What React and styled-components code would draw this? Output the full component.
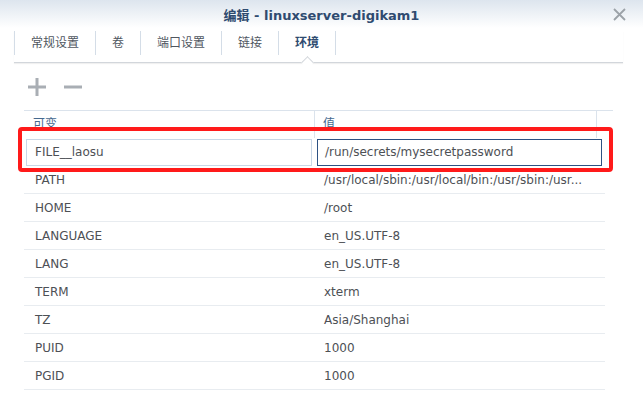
import React from 'react';
import styled, { createGlobalStyle } from 'styled-components';

const GlobalStyle = createGlobalStyle`
    body {
        margin: 0;
        background: #fff;
        font-family: "DejaVu Sans", "Noto Sans CJK SC", sans-serif;
        font-size: 12px;
        color: #4d5055;
    }
`

const Window = styled.div`
    width: 643px;
    height: 400px;
    overflow: hidden;
    background: #fff;
`

const TitleBar = styled.div`
    height: 28px;
    display: grid;
    grid-template-columns: 1fr auto 1fr;
    align-items: center;
    background: linear-gradient(#dde5ee, #ffffff);
`

const Title = styled.div`
    grid-column: 2;
    font-size: 13px;
    font-weight: bold;
    color: #2f4b70;
`

const CloseButton = styled.div`
    justify-self: end;
    margin-right: 17px;
    display: flex;
`

const TabBar = styled.div`
    display: flex;
    margin: 3px 20px 0 14px;
    padding-bottom: 7px;
    border-bottom: 1px solid #d2d6db;
    box-shadow: 0 1px 1px rgba(0,0,0,.06);
`

const Tab = styled.div`
    position: relative;
    height: 24px;
    line-height: 24px;
    padding: 0 16px;
    border-left: 1px solid #d4dde7;
    color: ${p => p.active ? '#2f4b70' : '#50575f'};
    font-weight: ${p => p.active ? 'bold' : 'normal'};

    &:last-child {
        border-right: 1px solid #d4dde7;
    }

    ${p => p.active && `
        &::after {
            content: '';
            position: absolute;
            left: 50%;
            bottom: -12px;
            width: 8px;
            height: 8px;
            margin-left: -4px;
            background: #fff;
            border-left: 1px solid #d2d6db;
            border-top: 1px solid #d2d6db;
            transform: rotate(45deg);
        }
    `}
`

const Toolbar = styled.div`
    display: flex;
    gap: 16px;
    padding: 14px 0 13px 27px;
`

const ToolIcon = styled.svg`
    width: 20px;
    height: 20px;
    display: block;
`

const Table = styled.div`
    position: relative;
    margin-left: 24px;
    width: 589px;
`

const HeaderRow = styled.div`
    display: grid;
    grid-template-columns: 291px 282px 16px;
    height: 28px;
    border-top: 1px solid #dbe3ec;
    box-sizing: border-box;
`

const HeaderCell = styled.div`
    padding-left: ${p => p.pad}px;
    line-height: 26px;
    color: #46698f;
    border-right: ${p => p.last ? 'none' : '1px solid #dbe3ec'};
`

const Row = styled.div`
    display: grid;
    grid-template-columns: 291px 290px;
    width: 581px;
    height: 28px;
    box-sizing: border-box;
    border-bottom: ${p => p.editing ? 'none' : '1px solid #e8ecf0'};
    align-items: center;
`

const Cell = styled.div`
    padding-left: ${p => p.pad}px;
    white-space: nowrap;
`

const Input = styled.div`
    height: 27px;
    box-sizing: border-box;
    margin-left: ${p => p.inset}px;
    margin-right: ${p => p.right}px;
    padding-left: ${p => p.pad}px;
    line-height: 25px;
    border: 1px solid ${p => p.focused ? '#2d5283' : '#c9d7e6'};
    color: #4d5055;
    background: #fff;
`

const Highlight = styled.div`
    position: absolute;
    left: -6px;
    top: 17px;
    width: 595px;
    height: 45px;
    box-sizing: border-box;
    border: 4px solid #ff1a1a;
    border-radius: 4px;
    pointer-events: none;
`

const tabs = ['常规设置', '卷', '端口设置', '链接', '环境'];

const envVars = [
    ['PATH', '/usr/local/sbin:/usr/local/bin:/usr/sbin:/usr...'],
    ['HOME', '/root'],
    ['LANGUAGE', 'en_US.UTF-8'],
    ['LANG', 'en_US.UTF-8'],
    ['TERM', 'xterm'],
    ['TZ', 'Asia/Shanghai'],
    ['PUID', '1000'],
    ['PGID', '1000'],
]

export default function App() {
    return (
        <Window>
            <GlobalStyle />
            <TitleBar>
                <Title>编辑 - linuxserver-digikam1</Title>
                <CloseButton>
                    <svg width="13" height="13" viewBox="0 0 13 13">
                        <path d="M1 1L12 12M12 1L1 12" stroke="#9ca2a8" strokeWidth="1.8" />
                    </svg>
                </CloseButton>
            </TitleBar>

            <TabBar>
                {tabs.map((t, i) => (
                    <Tab key={t} active={i === tabs.length - 1}>{t}</Tab>
                ))}
            </TabBar>

            <Toolbar>
                <ToolIcon viewBox="0 0 20 20">
                    <path d="M10 1V19M1 10H19" stroke="#a9aeb4" strokeWidth="3" />
                </ToolIcon>
                <ToolIcon viewBox="0 0 20 20">
                    <path d="M1 10H19" stroke="#a9aeb4" strokeWidth="3" />
                </ToolIcon>
            </Toolbar>

            <Table>
                <HeaderRow>
                    <HeaderCell pad={9}>可变</HeaderCell>
                    <HeaderCell pad={8}>值</HeaderCell>
                    <HeaderCell last />
                </HeaderRow>
                <Row editing>
                    <Input inset={2} right={3} pad={8}>FILE__laosu</Input>
                    <Input focused inset={2} right={3} pad={7}>/run/secrets/mysecretpassword</Input>
                </Row>
                {envVars.map(([name, value]) => (
                    <Row key={name}>
                        <Cell pad={11}>{name}</Cell>
                        <Cell pad={9}>{value}</Cell>
                    </Row>
                ))}
                <Highlight />
            </Table>
        </Window>
    )
}
